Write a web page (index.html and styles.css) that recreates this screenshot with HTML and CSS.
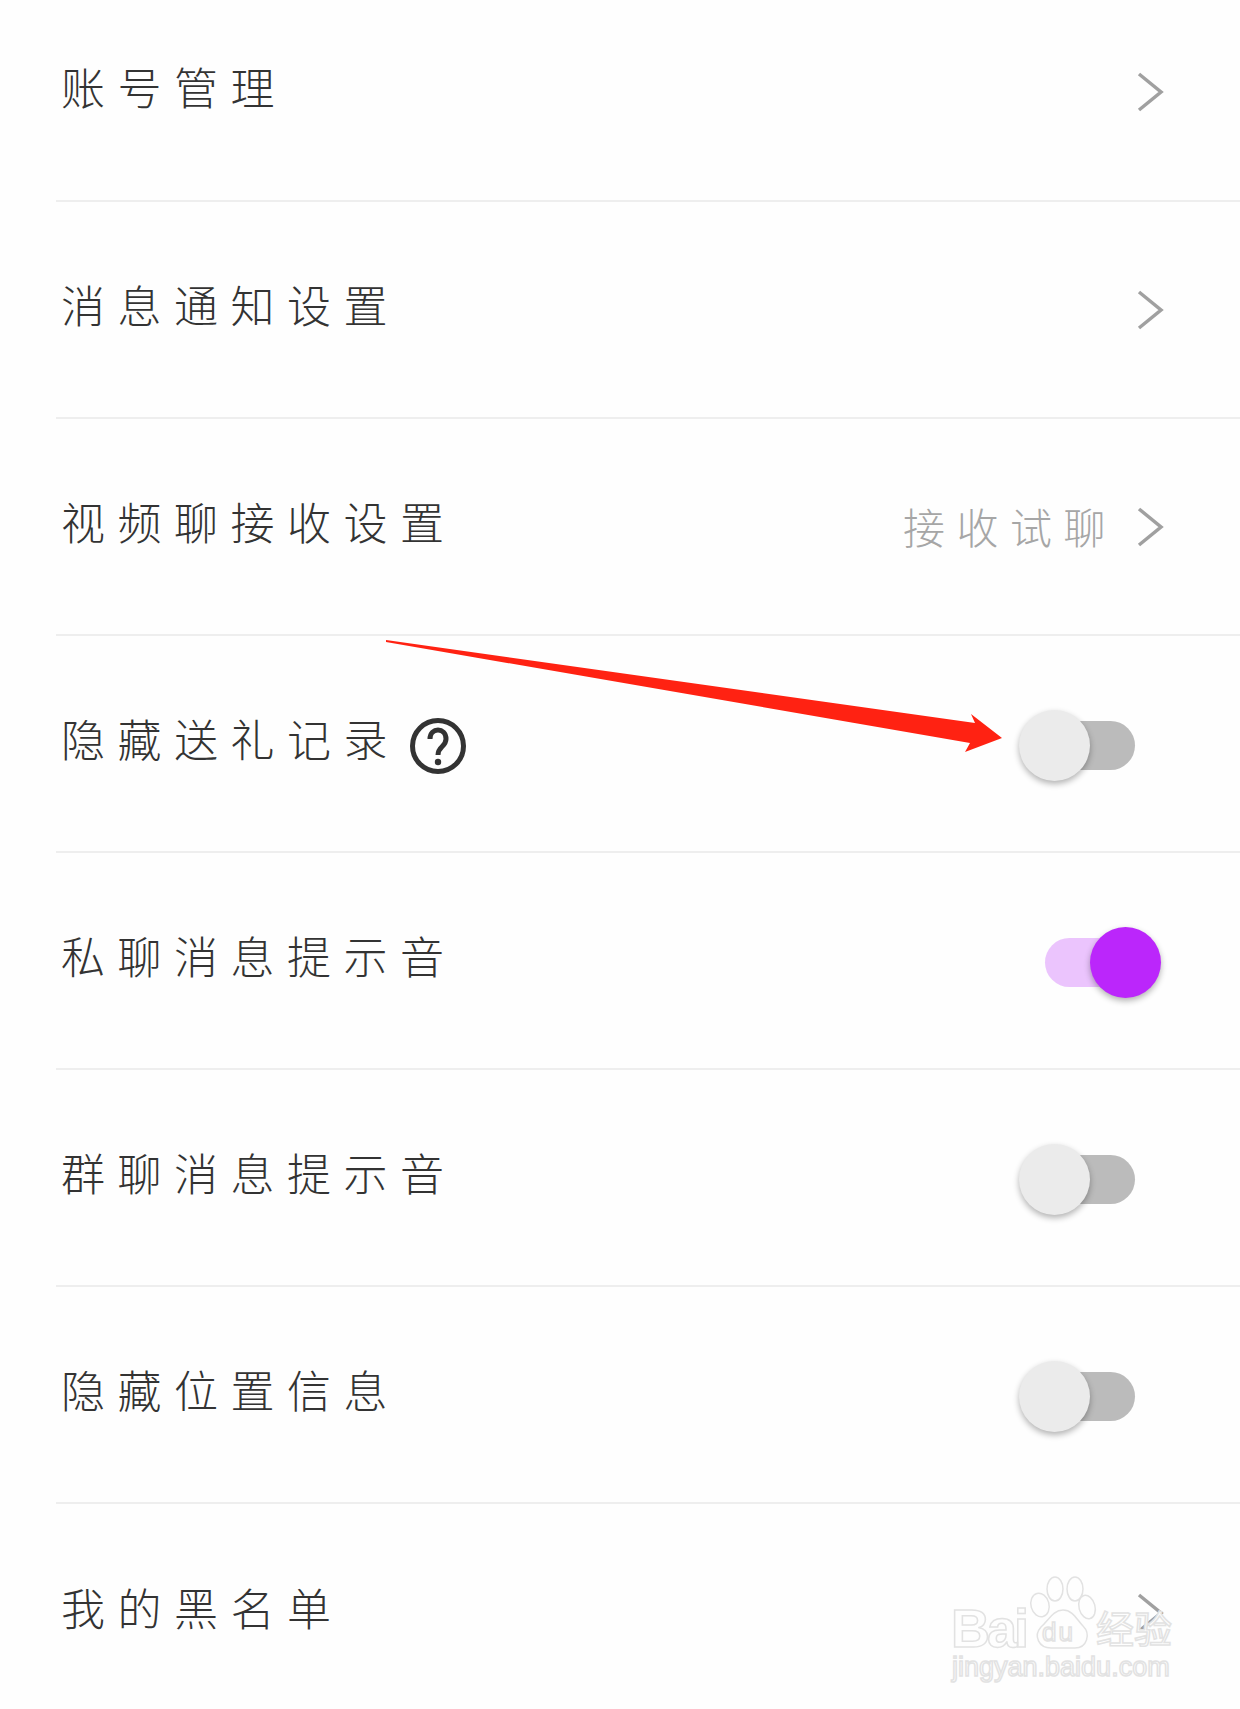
FILE: index.html
```html
<!DOCTYPE html>
<html lang="zh-CN">
<head>
  <meta charset="UTF-8">
  <title>设置</title>
  <link rel="stylesheet" href="styles.css">
</head>
<body>
  <div class="page">
    <ul class="list">
      <li class="row">
        <span class="label">账号管理</span>
        <svg class="chevron" viewBox="0 0 28 42"><path d="M3 3 L25 21 L3 39"/></svg>
      </li>
      <li class="row">
        <span class="label">消息通知设置</span>
        <svg class="chevron" viewBox="0 0 28 42"><path d="M3 3 L25 21 L3 39"/></svg>
      </li>
      <li class="row">
        <span class="label">视频聊接收设置</span>
        <span class="value">接收试聊</span>
        <svg class="chevron" viewBox="0 0 28 42"><path d="M3 3 L25 21 L3 39"/></svg>
      </li>
      <li class="row">
        <span class="label">隐藏送礼记录</span>
        <svg class="help" viewBox="0 0 56 56">
          <circle cx="28" cy="28" r="25.5"/>
          <path d="M20 21 C20 9 36 9 36 21 C36 29 28 28 28 37"/>
          <circle class="dot" cx="28" cy="44" r="3.2"/>
        </svg>
        <span class="switch"><i class="track"></i><i class="knob"></i></span>
      </li>
      <li class="row">
        <span class="label">私聊消息提示音</span>
        <span class="switch on"><i class="track"></i><i class="knob"></i></span>
      </li>
      <li class="row">
        <span class="label">群聊消息提示音</span>
        <span class="switch"><i class="track"></i><i class="knob"></i></span>
      </li>
      <li class="row">
        <span class="label">隐藏位置信息</span>
        <span class="switch"><i class="track"></i><i class="knob"></i></span>
      </li>
      <li class="row">
        <span class="label">我的黑名单</span>
        <svg class="chevron" viewBox="0 0 28 42"><path d="M3 3 L25 21 L3 39"/></svg>
      </li>
    </ul>

    <!-- red arrow drawn on top of the screenshot -->
    <svg class="arrow" viewBox="0 0 1240 1709">
      <polygon points="386,640 386,642 970,743 965,752 1002,738 971,714 975,723"/>
    </svg>

    <!-- watermark -->
    <div class="mark">
      <svg class="paw" viewBox="0 0 70 80">
        <ellipse cx="13" cy="31" rx="9" ry="12" transform="rotate(-15 13 31)"/>
        <ellipse cx="28" cy="15" rx="8" ry="12"/>
        <ellipse cx="48" cy="15" rx="8" ry="12"/>
        <ellipse cx="60" cy="33" rx="8" ry="12" transform="rotate(-15 60 33)"/>
        <path d="M36 36 C46 36 50 46 56 52 C64 60 60 74 48 74 L24 74 C12 74 6 62 14 53 C22 46 26 36 36 36 Z"/>
      </svg>
      <span class="mark-bai">Bai</span>
      <span class="mark-du">du</span>
      <span class="mark-cn">经验</span>
      <span class="mark-url">jingyan.baidu.com</span>
    </div>
  </div>
</body>
</html>
```

FILE: styles.css
```css
* {
  box-sizing: border-box;
}

html, body {
  margin: 0;
  padding: 0;
  background-color: #fefefe;
}

.page {
  position: relative;
  width: 1240px;
  height: 1709px;
  overflow: hidden;
  font-family: "Noto Sans CJK SC", sans-serif;
}

.list {
  list-style: none;
  margin: 0;
  padding: 0 0 0 56px;
}

.row {
  display: flex;
  align-items: center;
  height: 217px;
  padding-right: 76px;
  border-bottom: 2px solid #eeeeee;
}

.row:first-child {
  height: 202px;
  padding-bottom: 16px;
}

.row:last-child {
  border-bottom: none;
}

.label {
  margin-left: 5px;
  margin-bottom: 12px;
  font-size: 44px;
  font-weight: 300;
  letter-spacing: 12.5px;
  color: #333333;
  white-space: nowrap;
}

.value {
  margin-left: auto;
  margin-right: 19px;
  margin-bottom: 2px;
  font-size: 42px;
  font-weight: 300;
  letter-spacing: 11.5px;
  color: #a6a6a6;
  white-space: nowrap;
}

.chevron {
  width: 28px;
  height: 42px;
  margin-left: auto;
  fill: none;
  stroke: #a0a0a0;
  stroke-width: 3.5;
}

.value + .chevron {
  margin-left: 0;
}

.help {
  width: 56px;
  height: 56px;
  margin-left: 10px;
  margin-top: 4px;
  fill: none;
  stroke: #333333;
  stroke-width: 5;
}

.help .dot {
  fill: #333333;
  stroke: none;
}

.switch {
  position: relative;
  display: block;
  width: 142px;
  height: 71px;
  margin-left: auto;
  margin-right: 3px;
  margin-top: 4px;
}

.track {
  position: absolute;
  left: 26px;
  top: 11px;
  width: 90px;
  height: 49px;
  border-radius: 25px;
  background-color: #bbbbbb;
}

.knob {
  position: absolute;
  left: 0;
  top: 0;
  width: 71px;
  height: 71px;
  border-radius: 50%;
  background-color: #ebebeb;
  box-shadow: 0 3px 6px rgba(0, 0, 0, 0.3);
}

.switch.on .track {
  background-color: #ebc4fd;
}

.switch.on .knob {
  left: 71px;
  background-color: #bb26fb;
}

.arrow {
  position: absolute;
  left: 0;
  top: 0;
  width: 1240px;
  height: 1709px;
  fill: #ff2212;
}

.mark {
  position: absolute;
  left: 950px;
  top: 1574px;
  width: 230px;
  height: 115px;
  color: #fefefe;
  font-family: "Liberation Sans", sans-serif;
  -webkit-text-stroke: 1.5px #e2e2e2;
}

.paw {
  position: absolute;
  left: 77px;
  top: 0;
  width: 70px;
  height: 80px;
  fill: #fefefe;
  stroke: #e2e2e2;
  stroke-width: 1.5;
}

.mark-bai,
.mark-du,
.mark-cn,
.mark-url {
  position: absolute;
  white-space: nowrap;
  line-height: 1;
}

.mark-bai {
  left: 1px;
  top: 27px;
  font-size: 54px;
  font-weight: 700;
  letter-spacing: -3px;
}

.mark-du {
  left: 92px;
  top: 45px;
  font-size: 26px;
  letter-spacing: 2px;
}

.mark-cn {
  left: 146px;
  top: 34px;
  font-size: 38px;
  font-family: "Noto Sans CJK SC", sans-serif;
}

.mark-url {
  left: 2px;
  top: 80px;
  font-size: 27px;
}
```
